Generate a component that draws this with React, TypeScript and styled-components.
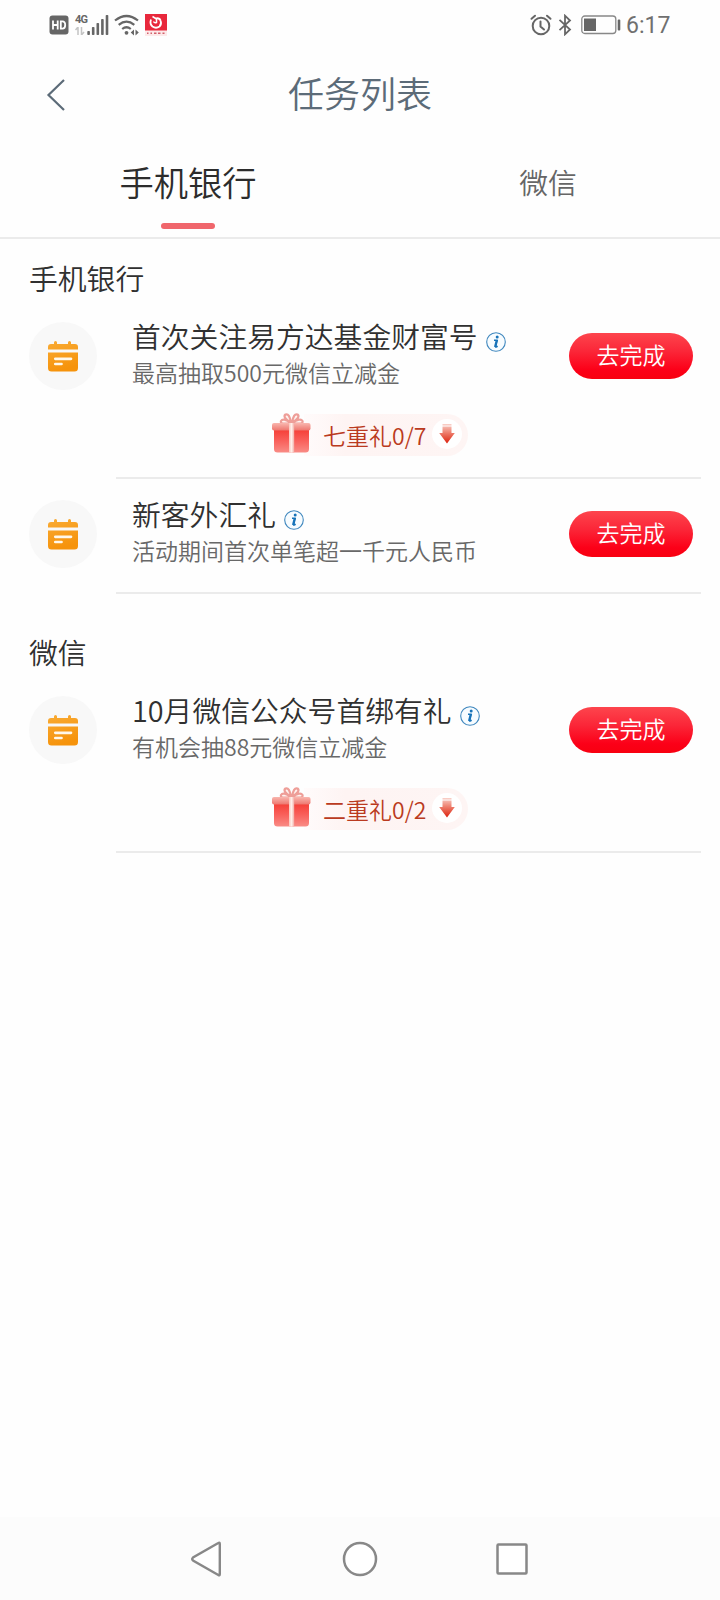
import React from "react";
import styled, { createGlobalStyle } from "styled-components";

const GlobalStyle = createGlobalStyle`
  *, *::before, *::after { box-sizing: border-box; }
  body {
    margin: 0;
    background: #fefefe;
    font-family: "Noto Sans CJK SC", "Noto Sans", sans-serif;
    font-weight: 350;
  }
  svg { display: block; flex: none; }
`;

const Screen = styled.div`
  width: 720px;
  height: 1600px;
  display: flex;
  flex-direction: column;
  background: #fefefe;
  overflow: hidden;
`;

const StatusBar = styled.div`
  height: 48px;
  padding: 2px 49px 0;
  display: flex;
  align-items: center;
  justify-content: space-between;
`;

const StatusGroup = styled.div`
  display: flex;
  align-items: center;
`;

const Clock = styled.span`
  margin-left: 5px;
  width: 45px;
  padding-top: 2px;
  font: 400 23px/32px "Roboto", sans-serif;
  color: #707070;
  white-space: nowrap;
`;

const Header = styled.header`
  height: 92px;
  display: grid;
  grid-template-columns: 120px 1fr 120px;
  align-items: center;
`;

const BackButton = styled.button`
  margin: 2px 0 0 46px;
  padding: 0;
  width: 20px;
  border: 0;
  background: none;
`;

const PageTitle = styled.h1`
  margin: -4px 0 0;
  font-size: 36px;
  line-height: 52px;
  font-weight: 350;
  text-align: center;
  color: #5c6b78;
`;

const Tabs = styled.nav`
  height: 99px;
  display: flex;
  border-bottom: 2px solid #ebebeb;
`;

const Tab = styled.div<{ $active?: boolean }>`
  width: ${(p) => (p.$active ? 376 : 344)}px;
  display: flex;
  flex-direction: column;
  align-items: center;
  padding-top: ${(p) => (p.$active ? 16 : 17)}px;
  font-size: ${(p) => (p.$active ? 34.3 : 28.8)}px;
  line-height: 50px;
  color: ${(p) => (p.$active ? "#2c2c2c" : "#666")};
`;

const TabMark = styled.span`
  margin-top: 17px;
  width: 54px;
  height: 6px;
  border-radius: 3px;
  background: #f0666c;
`;

const SectionTitle = styled.h2<{ $spaced?: boolean }>`
  margin: ${(p) => (p.$spaced ? 37 : 18)}px 0 0 29px;
  font-size: 28.8px;
  line-height: 42px;
  font-weight: 350;
  color: #303030;
`;

const TaskRow = styled.article<{ $height: number; $top: number }>`
  height: ${(p) => p.$height}px;
  padding: ${(p) => p.$top}px 0 0 29px;
  display: flex;
  align-items: flex-start;
`;

const IconDisc = styled.div`
  width: 68px;
  height: 68px;
  margin: 6px 19px 0 0;
  border-radius: 50%;
  background: #f8f8f8;
  display: flex;
  align-items: center;
  justify-content: center;
`;

const TaskBody = styled.div`
  width: 585px;
  align-self: stretch;
  display: flex;
  flex-direction: column;
  border-bottom: 2px solid #ebebeb;
`;

const TaskMain = styled.div`
  display: flex;
  justify-content: space-between;
  padding: 0 8px 0 16px;
`;

const TaskTitle = styled.h3`
  margin: 0;
  height: 40px;
  display: flex;
  align-items: center;
  gap: 8px;
  font-size: 28.8px;
  line-height: 40px;
  font-weight: 350;
  color: #303030;
  white-space: nowrap;

  svg { margin-top: 11px; }
`;

const TaskNote = styled.p`
  margin: 0;
  font-size: 23px;
  line-height: 32px;
  color: #686868;
  white-space: nowrap;
`;

const ActionButton = styled.button`
  width: 124px;
  height: 46px;
  margin: 17px 0 0;
  padding: 0 0 4px;
  border: 0;
  border-radius: 23px;
  background: linear-gradient(#fd454d 0%, #fb2638 40%, #fc0018 80%, #f80010 100%);
  color: #fff;
  font: 350 23px/40px "Noto Sans CJK SC", sans-serif;
`;

const RewardLine = styled.div`
  margin: 26px 0 0 155px;
  display: flex;
  align-items: center;

  & > svg { z-index: 1; margin-top: -4px; }
`;

const RewardPill = styled.div`
  height: 42px;
  width: 164px;
  margin-left: -7px;
  padding: 0 6px 0 19px;
  display: flex;
  align-items: center;
  justify-content: space-between;
  border-radius: 0 21px 21px 0;
  background: linear-gradient(90deg, #fffbfb, #fef4f3 25%, #fef5f4);
  font-size: 23px;
  line-height: 32px;
  color: #ba3a20;
  white-space: nowrap;
`;

const ArrowDisc = styled.span`
  width: 30px;
  height: 30px;
  margin-top: -2px;
  border-radius: 50%;
  background: #fff;
  display: flex;
  align-items: center;
  justify-content: center;
`;

const NavBar = styled.footer`
  margin-top: auto;
  height: 83px;
  display: flex;
  align-items: center;
  justify-content: center;
  gap: 116px;
  background: #fcfcfc;
`;

const HdIcon = () => (
  <svg width="20" height="20" viewBox="0 0 20 20">
    <rect x="0.5" y="0.5" width="19" height="19" rx="3" fill="#666" />
    <path d="M4 5.5v9M8.7 5.5v9M4 10h4.7M11.8 6.3h1.6q2.8 0 2.8 3.7t-2.8 3.7h-1.6z" fill="none" stroke="#fff" strokeWidth="1.8" />
  </svg>
);

const NetworkLabel = styled.span`
  width: 12px;
  height: 22px;
  margin-left: 6px;
  display: flex;
  flex-direction: column;
  align-items: flex-start;
  gap: 2px;
  font: 700 11px/11px "Roboto", sans-serif;
  letter-spacing: -0.8px;
  color: #666;
`;

const SignalIcon = () => (
  <svg width="22" height="22" viewBox="0 0 22 22">
    {[4, 8, 12, 16, 20].map((h, i) => (
      <rect key={h} x={0.3 + i * 4.6} y={21 - h} width="2.6" height={h} rx="0.8" fill="#666" />
    ))}
  </svg>
);

const WifiIcon = () => (
  <svg width="26" height="22" viewBox="0 0 26 22" fill="none" stroke="#666" strokeWidth="2.2">
    <path d="M1 6.5Q12.5-2.5 24 6.5M4.7 10.8Q12.5 4.6 20.3 10.8M8.2 15Q12.5 11.5 16.8 15" />
    <circle cx="12.5" cy="18.8" r="1.9" fill="#666" stroke="none" />
    <path d="M20 15.5v6l-3.3-3zM21.5 15.5v6l3.3-3z" fill="#666" stroke="none" />
  </svg>
);

const BankIcon = () => (
  <svg width="22" height="22" viewBox="0 0 22 22">
    <rect width="22" height="22" fill="#fdeaea" />
    <rect width="22" height="16.5" fill="#e8283c" />
    <path d="M6 5.500Q4.500 10 7.500 12.500Q11 15 14.500 12.500Q17 10 15.500 6.500Q14.500 3.500 10.500 4.500" fill="none" stroke="#fff" strokeWidth="1.8" />
    <path d="M7.500 2.500L11.500 5V8.500Q9.500 9.500 8.500 7.500" stroke="#fff" strokeWidth="1.5" fill="none" />
    <path d="M2 19.2h1.5M5.5 19.2h1.5M9 19.2h2.5M13 19.2h2.5M17.5 19.2h2" stroke="#d2616c" strokeWidth="1.6" />
  </svg>
);

const AlarmIcon = () => (
  <svg width="22" height="22" viewBox="0 0 22 22" fill="none" stroke="#666" strokeWidth="2" strokeLinecap="round">
    <circle cx="11" cy="12" r="8.3" />
    <path d="M1.5 4.8L5 1.7M20.5 4.8L17 1.7M10.5 7.5v5l3.5 3" />
  </svg>
);

const BluetoothIcon = () => (
  <svg width="14" height="22" viewBox="0 0 14 22" fill="none" stroke="#666" strokeWidth="1.8">
    <path d="M1.5 5.8L12 15.5L7 20.3V1.7L12 6.5L1.5 16.2" />
  </svg>
);

const BatteryIcon = () => (
  <svg width="40" height="20" viewBox="0 0 40 20">
    <rect x="0.8" y="1" width="34" height="17.5" rx="3" fill="none" stroke="#888" strokeWidth="1.3" />
    <rect x="3" y="3.5" width="12" height="12.5" fill="#666" />
    <rect x="36.7" y="4.5" width="2.6" height="11" rx="1" fill="#666" />
  </svg>
);

const CalendarIcon = () => (
  <svg width="32" height="32" viewBox="0 0 32 32">
    <defs>
      <linearGradient id="calendar" x1="0" y1="0" x2="0.3" y2="1">
        <stop offset="0" stopColor="#f9ab34" />
        <stop offset="1" stopColor="#f6930b" />
      </linearGradient>
    </defs>
    <path
      d="M1 9.5V7Q1 4 4 4H7V2.5Q7 1 8.5 1T10 2.5V4H21V2.5Q21 1 22.5 1T24 2.5V4H28Q31 4 31 7V9.5ZM1 12.5H31V28Q31 31.5 27.5 31.5H4.5Q1 31.5 1 28Z"
      fill="url(#calendar)"
    />
    <path d="M8.3 18.8H24M8.3 24H14.5" stroke="#fff8ea" strokeWidth="2.7" strokeLinecap="round" />
  </svg>
);

const InfoIcon = () => (
  <svg width="20" height="20" viewBox="0 0 20 20">
    <circle cx="10" cy="10" r="9.3" fill="#f7fcff" stroke="#3f87be" strokeWidth="1.1" />
    <circle cx="11.2" cy="4.9" r="1.5" fill="#1773b9" />
    <path d="M8 8.2h3.3l-1.7 6.7q0 .7 2-.8" fill="none" stroke="#1773b9" strokeWidth="1.5" strokeLinejoin="round" />
    <path d="M10.6 8.5L9 15" stroke="#1773b9" strokeWidth="2" />
  </svg>
);

const GiftIcon = () => (
  <svg width="40" height="42" viewBox="0 0 40 42">
    <defs>
      <linearGradient id="giftLid" x1="0" y1="0" x2="0" y2="1">
        <stop offset="0" stopColor="#f9b6ae" />
        <stop offset="1" stopColor="#ee766e" />
      </linearGradient>
      <linearGradient id="giftBox" x1="0" y1="0" x2="0" y2="1">
        <stop offset="0" stopColor="#f53d35" />
        <stop offset="0.5" stopColor="#f9605b" />
        <stop offset="1" stopColor="#f98c86" />
      </linearGradient>
      <linearGradient id="giftRibbon" x1="0" y1="0" x2="1" y2="0">
        <stop offset="0" stopColor="#fbc7bd" />
        <stop offset="0.5" stopColor="#fff0eb" />
        <stop offset="1" stopColor="#f2aba4" />
      </linearGradient>
    </defs>
    <path
      d="M20 11Q11 5 14.5 2.5Q18.5 1 20 11Q8.500 13 10 9Q12 5.500 20 11ZM21 11Q30 5 26.500 2.500Q22.500 1 21 11Q33 13 31.500 9Q29.500 5.500 21 11Z"
      fill="#fff3f0"
      stroke="#ee9e98"
      strokeWidth="2.2"
    />
    <path d="M3 17H38V37Q38 40.5 34.5 40.5H6.5Q3 40.5 3 37Z" fill="url(#giftBox)" />
    <rect x="1" y="11" width="38.5" height="7.5" rx="2" fill="url(#giftLid)" />
    <rect x="18" y="11" width="5.2" height="29.5" fill="url(#giftRibbon)" />
  </svg>
);

const ArrowIcon = () => (
  <svg width="18" height="22" viewBox="0 0 18 22">
    <defs>
      <linearGradient id="arrow" x1="0" y1="0" x2="0" y2="1">
        <stop offset="0" stopColor="#f9d0c8" />
        <stop offset="0.5" stopColor="#ec7563" />
        <stop offset="1" stopColor="#dc210d" />
      </linearGradient>
    </defs>
    <path d="M4.500 1H13.500V2.500H4.500ZM4.500 3.500H13.500V10H16.800L9 20.500L1.200 10H4.500Z" fill="url(#arrow)" />
  </svg>
);

interface TaskProps {
  title: string;
  note: string;
  reward?: string;
  height: number;
  top: number;
}

const Task = ({ title, note, reward, height, top }: TaskProps) => (
  <TaskRow $height={height} $top={top}>
    <IconDisc>
      <CalendarIcon />
    </IconDisc>
    <TaskBody>
      <TaskMain>
        <div>
          <TaskTitle>
            {title}
            <InfoIcon />
          </TaskTitle>
          <TaskNote>{note}</TaskNote>
        </div>
        <ActionButton>去完成</ActionButton>
      </TaskMain>
      {reward && (
        <RewardLine>
          <GiftIcon />
          <RewardPill>
            {reward}
            <ArrowDisc>
              <ArrowIcon />
            </ArrowDisc>
          </RewardPill>
        </RewardLine>
      )}
    </TaskBody>
  </TaskRow>
);

const SignalGroup = styled(StatusGroup)`
  & > svg:nth-of-type(3) { margin: 0 5px; }
`;

const SystemGroup = styled(StatusGroup)`
  & > svg:nth-of-type(2) { margin: 0 9px 0 6px; }
`;

export default function App() {
  return (
    <Screen>
      <GlobalStyle />
      <StatusBar>
        <SignalGroup>
          <HdIcon />
          <NetworkLabel>
            4G
            <svg width="10" height="8" viewBox="0 0 10 8">
              <path d="M3 8V0L.5 3M6.5 0V8L9 5" fill="none" stroke="#c4c4c4" strokeWidth="1.5" />
            </svg>
          </NetworkLabel>
          <SignalIcon />
          <WifiIcon />
          <BankIcon />
        </SignalGroup>
        <SystemGroup>
          <AlarmIcon />
          <BluetoothIcon />
          <BatteryIcon />
          <Clock>6:17</Clock>
        </SystemGroup>
      </StatusBar>
      <Header>
        <BackButton aria-label="返回">
          <svg width="20" height="32" viewBox="0 0 20 32">
            <path d="M18 1L2.5 16L18 31" fill="none" stroke="#5c6b78" strokeWidth="2.2" />
          </svg>
        </BackButton>
        <PageTitle>任务列表</PageTitle>
      </Header>
      <Tabs>
        <Tab $active>
          手机银行
          <TabMark />
        </Tab>
        <Tab>微信</Tab>
      </Tabs>
      <SectionTitle>手机银行</SectionTitle>
      <Task title="首次关注易方达基金财富号" note="最高抽取500元微信立减金" reward="七重礼0/7" height={180} top={17} />
      <Task title="新客外汇礼" note="活动期间首次单笔超一千元人民币" height={115} top={15} />
      <SectionTitle $spaced>微信</SectionTitle>
      <Task title="10月微信公众号首绑有礼" note="有机会抽88元微信立减金" reward="二重礼0/2" height={180} top={17} />
      <NavBar>
        <svg width="36" height="36" viewBox="0 0 36 36">
          <path d="M29.8 3V33Q29.8 35 28.3 34L3 19.5Q1.5 18 3 16.5L28.3 2Q29.8 1 29.8 3Z" fill="#fff" stroke="#888" strokeWidth="2.4" />
        </svg>
        <svg width="36" height="36" viewBox="0 0 36 36">
          <circle cx="18" cy="18" r="16" fill="#fff" stroke="#888" strokeWidth="2.5" />
        </svg>
        <svg width="36" height="36" viewBox="0 0 36 36">
          <rect x="3.5" y="3.5" width="29" height="29" rx="1" fill="#fff" stroke="#888" strokeWidth="2.5" />
        </svg>
      </NavBar>
    </Screen>
  );
}
